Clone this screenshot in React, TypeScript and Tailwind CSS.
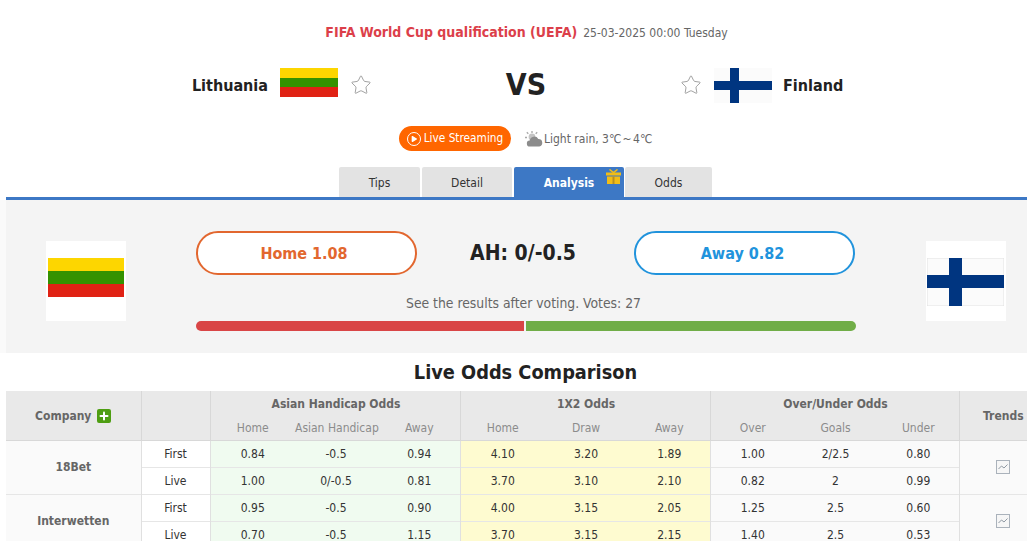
import React from 'react';
import { Star, Play, Plus } from 'lucide-react';

const tableRows = [
  {
    company: '18Bet',
    rows: [
      ['First', '0.84', '-0.5', '0.94', '4.10', '3.20', '1.89', '1.00', '2/2.5', '0.80'],
      ['Live', '1.00', '0/-0.5', '0.81', '3.70', '3.10', '2.10', '0.82', '2', '0.99'],
    ],
  },
  {
    company: 'Interwetten',
    rows: [
      ['First', '0.95', '-0.5', '0.90', '4.00', '3.15', '2.05', '1.25', '2.5', '0.60'],
      ['Live', '0.70', '-0.5', '1.15', '3.70', '3.15', '2.15', '1.40', '2.5', '0.53'],
    ],
  },
];

const LithuaniaFlag = ({ className }: { className: string }) => (
  <div className={`flex flex-col ${className}`}>
    <div className="flex-1 bg-[#fdd600]" />
    <div className="flex-1 bg-[#349200]" />
    <div className="flex-1 bg-[#e02214]" />
  </div>
);

const FinlandFlag = () => (
  <svg viewBox="0 0 58 35" className="w-[58px] h-[35px] block">
    <rect width="58" height="35" fill="#fbfbfb" />
    <rect x="16" width="9" height="35" fill="#003580" />
    <rect y="13" width="58" height="9" fill="#003580" />
  </svg>
);

const WeatherIcon = () => (
  <svg viewBox="0 0 18 16" className="w-[18px] h-[16px]">
    <circle cx="7" cy="6" r="3.4" fill="#c4c4c4" />
    <path d="M7 0v2M1.800 1.200l1.500 1.500M12.200 1.200l-1.500 1.500M0 6.500h2" stroke="#a8a8a8" strokeWidth="1.300" />
    <path d="M5 15.500a3 3 0 0 1-.3-6 4.600 4.600 0 0 1 8.600-1.500 3.800 3.800 0 0 1 1 7.500z" fill="#8c8c8c" />
  </svg>
);

const GiftIcon = () => (
  <svg viewBox="0 0 15 15" className="w-[15px] h-[15px]">
    <path d="M3.500 0.500l4 3 4-3" fill="none" stroke="#f2bd16" strokeWidth="1.500" />
    <rect y="3.500" width="15" height="3" fill="#f2bd16" />
    <rect x="1" y="7.500" width="13" height="7.500" fill="#f2bd16" />
    <rect x="6.500" y="7.500" width="2" height="7.500" fill="#b98f20" />
  </svg>
);

const TrendIcon = () => (
  <svg viewBox="0 0 14 14" className="w-[14px] h-[14px] mx-auto block">
    <rect x="0.500" y="0.500" width="13" height="13" fill="#f6f6f6" stroke="#aab2bb" />
    <path d="M2.500 9l3-3 2.500 2 3.500-3.500" fill="none" stroke="#8f99a3" />
  </svg>
);

const App: React.FC = () => {
  return (
    <div className="w-[1027px] h-[541px] overflow-hidden bg-white text-[#333] font-['DejaVu_Sans_Condensed','DejaVu_Sans',sans-serif]">
      <div className="pt-[23px] h-[68px] flex justify-center items-baseline pl-[26px] gap-[6px]">
        <span className="text-[14px] leading-[18px] font-bold text-[#dc3f4a]">FIFA World Cup qualification (UEFA)</span>
        <span className="text-[12px] text-[#666]">25-03-2025 00:00 Tuesday</span>
      </div>

      <div className="h-[58px] grid grid-cols-[371px_310px_1fr] items-start">
        <div className="flex justify-end items-start">
          <span className="mt-[6px] text-[16px] leading-[24px] font-bold text-[#222]">Lithuania</span>
          <LithuaniaFlag className="w-[58px] h-[29px] ml-[12px]" />
          <Star strokeWidth={1} className="w-[22px] h-[22px] ml-[12px] mt-[6px] mr-[-1px] text-[#999]" />
        </div>
        <div className="text-center text-[30px] leading-[34px] font-bold text-[#222]">VS</div>
        <div className="flex items-start -ml-[1px]">
          <Star strokeWidth={1} className="w-[22px] h-[22px] mt-[6px] text-[#999]" />
          <div className="ml-[12px]">
            <FinlandFlag />
          </div>
          <span className="ml-[11px] mt-[6px] text-[16px] leading-[24px] font-bold text-[#222]">Finland</span>
        </div>
      </div>

      <div className="h-[41px] flex items-start justify-center pl-[24px]">
        <div className="h-[25px] w-[112px] pt-[1px] rounded-full bg-[#ff6600] text-white flex items-center justify-center gap-[3px] text-[11.75px]">
          <span className="w-[14px] h-[14px] rounded-full border border-white flex items-center justify-center">
            <Play className="w-[8px] h-[8px] fill-white" strokeWidth={0} />
          </span>
          Live Streaming
        </div>
        <div className="h-[25px] ml-[14px] flex items-center gap-[1px] text-[12px] text-[#666]">
          <WeatherIcon />
          <span>
            Light rain, <span className="[word-spacing:-2px]">3℃ ~ 4℃</span>
          </span>
        </div>
      </div>

      <div className="h-[30px] flex pl-[339px] gap-[2px] text-[12px] text-[#333]">
        <div className="w-[81px] pt-[1px] bg-[#e3e3e3] flex items-center justify-center rounded-t-[2px]">Tips</div>
        <div className="w-[90px] pt-[1px] bg-[#e3e3e3] flex items-center justify-center rounded-t-[2px]">Detail</div>
        <div className="relative w-[110px] pt-[1px] bg-[#3d78c5] text-white font-bold flex items-center justify-center rounded-t-[2px]">
          Analysis
          <span className="absolute right-[3px] top-[2px]">
            <GiftIcon />
          </span>
        </div>
        <div className="w-[87px] -ml-[1px] pt-[1px] bg-[#e3e3e3] flex items-center justify-center rounded-t-[2px]">Odds</div>
      </div>

      <div className="ml-[6px] h-[3px] bg-[#3d78c5]" />

      <div className="pl-[6px] bg-[#fafafa]">
        <div className="h-[153px] bg-[#f4f4f4] flex pt-[31px]">
          <div className="w-[190px] pl-[40px] pt-[10px]">
            <div className="w-[80px] h-[80px] bg-white pt-[17px] px-[2px]">
              <LithuaniaFlag className="w-full h-[39px]" />
            </div>
          </div>

          <div className="w-[660px]">
            <div className="h-[44px] flex items-center justify-between pr-[1px]">
              <div className="w-[221px] h-[44px] pr-[5px] pt-[1px] rounded-full bg-white border-2 border-[#e2672f] text-[#e2672f] flex items-center justify-center text-[16px] font-bold">
                Home 1.08
              </div>
              <div className="pr-[5px] pt-[2px] text-[21px] font-bold text-[#222]">AH: 0/-0.5</div>
              <div className="w-[221px] h-[44px] pr-[4px] pt-[1px] rounded-full bg-white border-2 border-[#2193dc] text-[#2193dc] flex items-center justify-center text-[16px] font-bold">
                Away 0.82
              </div>
            </div>
            <div className="mt-[18px] h-[20px] pr-[5px] text-center text-[13.8px] leading-[20px] text-[#666]">
              See the results after voting. Votes: 27
            </div>
            <div className="mt-[8px] h-[10px] flex gap-[2px]">
              <div className="w-[328px] rounded-l-full bg-[#d94546]" />
              <div className="flex-1 rounded-r-full bg-[#70ad47]" />
            </div>
          </div>

          <div className="pl-[70px] pt-[10px]">
            <div className="w-[80px] h-[80px] bg-white pt-[17px] px-[1px]">
              <svg viewBox="0 0 77 48" className="w-[77px] h-[48px] block">
                <rect width="77" height="48" fill="#fbfbfb" stroke="#e2e2e2" />
                <rect x="22" width="13" height="48" fill="#003580" />
                <rect y="17" width="77" height="13" fill="#003580" />
              </svg>
            </div>
          </div>
        </div>
      </div>

      <h2 className="h-[38px] pl-[24px] pt-[2px] flex items-center justify-center text-[19.75px] font-bold text-[#222]">
        Live Odds Comparison
      </h2>

      <table className="ml-[6px] w-[1041px] table-fixed border-collapse text-[12px] text-center whitespace-nowrap">
        <colgroup>
          <col className="w-[135px]" />
          <col className="w-[69px]" />
          <col className="w-[83px]" />
          <col className="w-[84px]" />
          <col className="w-[83px]" />
          <col className="w-[83px]" />
          <col className="w-[84px]" />
          <col className="w-[83px]" />
          <col className="w-[83px]" />
          <col className="w-[83px]" />
          <col className="w-[83px]" />
          <col className="w-[88px]" />
        </colgroup>
        <thead className="bg-[#e9e9e9]">
          <tr className="h-[24px] text-[#666]">
            <th rowSpan={2} className="pt-[2px] border-r border-b border-[#d8d8d8]">
              <span className="inline-flex items-center gap-[6px]">
                Company
                <span className="w-[14px] h-[14px] bg-[#4e9e12] rounded-[2px] flex items-center justify-center">
                  <Plus className="w-[12px] h-[12px] text-white" strokeWidth={4} />
                </span>
              </span>
            </th>
            <th rowSpan={2} className="border-r border-b border-[#d8d8d8]" />
            <th colSpan={3} className="pt-[2px] pl-[2px] border-r border-[#d8d8d8]">Asian Handicap Odds</th>
            <th colSpan={3} className="pt-[2px] pl-[2px] border-r border-[#d8d8d8]">1X2 Odds</th>
            <th colSpan={3} className="pt-[2px] pl-[2px] border-r border-[#d8d8d8]">Over/Under Odds</th>
            <th rowSpan={2} className="pt-[2px] border-b border-[#d8d8d8]">Trends</th>
          </tr>
          <tr className="h-[25px] text-[#8c8c8c] border-b border-[#d8d8d8]">
            <td className="pt-[2px] pl-[2px]">Home</td>
            <td className="pt-[2px] pl-[2px]">Asian Handicap</td>
            <td className="pt-[2px] pl-[2px] border-r border-[#d8d8d8]">Away</td>
            <td className="pt-[2px] pl-[2px]">Home</td>
            <td className="pt-[2px] pl-[2px]">Draw</td>
            <td className="pt-[2px] pl-[2px] border-r border-[#d8d8d8]">Away</td>
            <td className="pt-[2px] pl-[2px]">Over</td>
            <td className="pt-[2px] pl-[2px]">Goals</td>
            <td className="pt-[2px] pl-[2px] border-r border-[#d8d8d8]">Under</td>
          </tr>
        </thead>
        <tbody className="text-[#333]">
          {tableRows.map((group) =>
            group.rows.map((row, i) => (
              <tr key={group.company + i} className="h-[27px] border-b border-[#e6e6e6]">
                {i === 0 && (
                  <td rowSpan={2} className="bg-[#fafafa] font-bold text-[#666] border-r border-[#e0e0e0]">
                    {group.company}
                  </td>
                )}
                <td className="bg-white border-r border-[#e0e0e0]">{row[0]}</td>
                <td className="pl-[2px] bg-[#f0fbf0]">{row[1]}</td>
                <td className="pl-[2px] bg-[#f0fbf0]">{row[2]}</td>
                <td className="pl-[2px] bg-[#f0fbf0] border-r border-[#e0e0e0]">{row[3]}</td>
                <td className="pl-[2px] bg-[#fefbd0]">{row[4]}</td>
                <td className="pl-[2px] bg-[#fefbd0]">{row[5]}</td>
                <td className="pl-[2px] bg-[#fefbd0] border-r border-[#e0e0e0]">{row[6]}</td>
                <td className="pl-[2px] bg-[#fafafa]">{row[7]}</td>
                <td className="pl-[2px] bg-[#fafafa]">{row[8]}</td>
                <td className="pl-[2px] bg-[#fafafa] border-r border-[#e0e0e0]">{row[9]}</td>
                {i === 0 && (
                  <td rowSpan={2} className="bg-[#fafafa]">
                    <TrendIcon />
                  </td>
                )}
              </tr>
            )),
          )}
        </tbody>
      </table>
    </div>
  );
};

export default App;
